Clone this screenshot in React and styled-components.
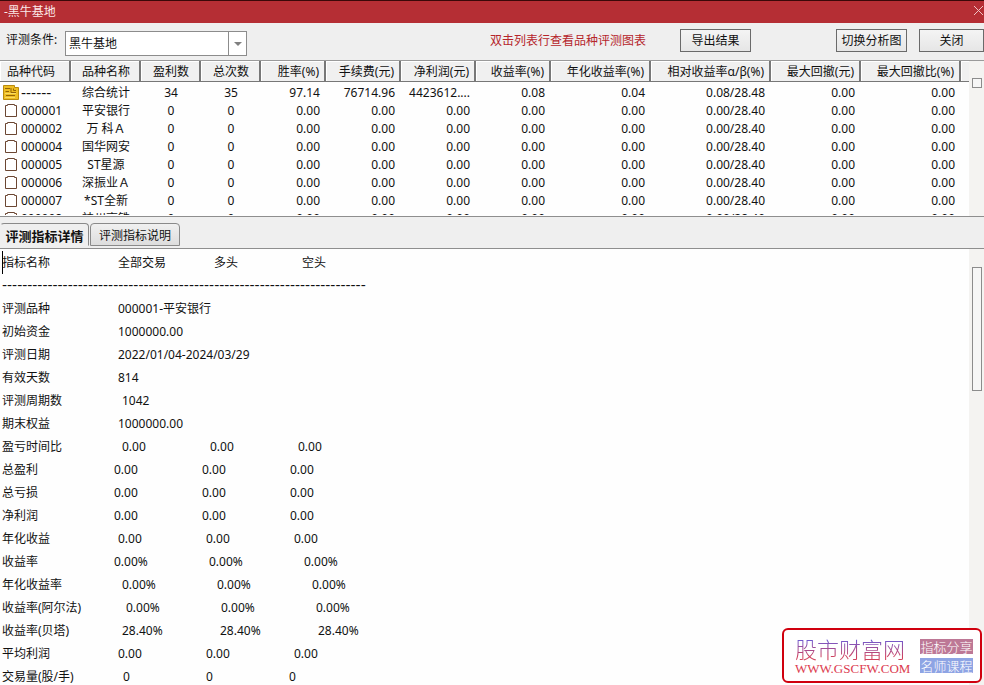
import React from 'react';
import styled, { createGlobalStyle } from 'styled-components';

const GlobalStyle = createGlobalStyle`
  * {
    box-sizing: border-box;
  }

  body {
    margin: 0;
    overflow: hidden;
    background: #fefefe;
    color: #111111;
    font: 12px/18px "Noto Sans", "Noto Sans CJK SC", sans-serif;
  }

  button, select {
    font: inherit;
    color: inherit;
  }
`;

const Window = styled.div`
  display: flex;
  flex-direction: column;
  height: 100vh;
`;

const TitleBar = styled.header`
  display: flex;
  justify-content: space-between;
  align-items: center;
  flex: none;
  height: 23px;
  padding-left: 4px;
  border-top: 1px solid #3a0808;
  background: #b52e34;
  color: #fbe9e9;
`;

const Title = styled.h1`
  margin: 0;
  font-size: 12px;
  font-weight: 400;
`;

const CloseIcon = styled.button`
  display: flex;
  padding: 0 0 4px;
  border: 0;
  background: none;
`;

const Toolbar = styled.div`
  display: flex;
  align-items: flex-start;
  flex: none;
  height: 37px;
  padding: 6px 0 0 6px;
  background: #efefef;
`;

const ToolbarLabel = styled.label`
  width: 59px;
  padding-top: 2px;
`;

const SelectBox = styled.div`
  display: flex;
  position: relative;
  width: 182px;
  height: 25px;
  margin-top: 2px;
`;

const Select = styled.select`
  appearance: none;
  width: 100%;
  padding: 0 22px 0 3px;
  border: 1px solid #8c8c8c;
  border-radius: 0;
  background: #ffffff;
`;

const SelectArrow = styled.span`
  display: flex;
  justify-content: center;
  align-items: center;
  position: absolute;
  top: 0;
  right: 0;
  width: 19px;
  height: 25px;
  border: 1px solid #8c8c8c;
  pointer-events: none;
`;

const Actions = styled.div`
  display: flex;
  flex: 1;
  justify-content: flex-end;
`;

const Hint = styled.span`
  padding-top: 3px;
  margin-right: 34px;
  color: #b5252b;
`;

const ToolButton = styled.button`
  width: ${props => props.$width || 71}px;
  height: 23px;
  margin-right: ${props => props.$gap || 0}px;
  padding: 0;
  border: 1px solid #6a6a6a;
  background: linear-gradient(#f4f4f4, #e6e6e6);
`;

const ListPane = styled.section`
  display: flex;
  flex: none;
  height: 157px;
  overflow: hidden;
  border-top: 1px solid #9a9a9a;
  border-bottom: 1px solid #8e8e8e;
`;

const ListClip = styled.div`
  flex: 1;
  height: 154px;
  overflow: hidden;
`;

const ListTable = styled.table`
  width: 100%;
  table-layout: fixed;
  border-collapse: separate;
  border-spacing: 0;
`;

const ListBody = styled.tbody`
  &::before {
    content: '';
    display: block;
    height: 2px;
  }
`;

const HeadCell = styled.th`
  height: 21px;
  padding: 1px 5px 0 7px;
  border: solid #777777;
  border-width: 0 2px 1px 0;
  background: #f0f0f0;
  box-shadow: inset 1px 1px 0 #ffffff;
  font-weight: 400;
  line-height: 19px;
  text-align: ${props => props.$align};
  white-space: nowrap;

  &:last-child {
    border-right: 0;
  }
`;

const ListRow = styled.tr`
  height: 18px;
`;

const Cell = styled.td`
  padding: ${props => (props.$align === 'right' ? '0 6px 0 0' : '0')};
  overflow: hidden;
  line-height: 18px;
  text-align: ${props => props.$align};
  text-overflow: ellipsis;
  white-space: nowrap;
`;

const Code = styled.span`
  display: flex;
  align-items: center;
  gap: 2px;
  padding-left: 2px;
`;

const Dashes = styled.span`
  font-family: "DejaVu Sans", sans-serif;
  font-size: 14px;
`;

const ScrollTrack = styled.div`
  flex: none;
  width: 15px;
  padding: ${props => props.$top}px 2px 0 3px;
  background: #f4f3f1;
`;

const ScrollThumb = styled.div`
  height: ${props => props.$height}px;
  border: 1px solid #8c8c8c;
  background: #f6f6f6;
`;

const TabStrip = styled.div`
  display: flex;
  gap: 1px;
  flex: none;
  height: 32px;
  padding-top: 6px;
  border-bottom: 1px solid #8e8e8e;
  background: #efefef;
`;

const Tab = styled.button`
  width: ${props => (props.$active ? 89 : 90)}px;
  height: 23px;
  padding: 2px 0 0;
  border: 1px solid #8a8a8a;
  border-bottom-color: ${props => (props.$active ? '#efefef' : '#8a8a8a')};
  border-left-color: ${props => (props.$active ? '#efefef' : '#8a8a8a')};
  border-radius: 4px 4px 0 0;
  background: ${props => (props.$active ? '#efefef' : 'linear-gradient(#f0f0f0, #dddddd)')};
  font-size: ${props => (props.$active ? 13 : 12)}px;
  font-weight: ${props => (props.$active ? 700 : 400)};
`;

const DetailPane = styled.section`
  display: flex;
  flex: 1;
  min-height: 0;
  overflow: hidden;
`;

const DetailTable = styled.table`
  display: block;
  flex: 1;
  padding: 2px 0 0 2px;
  border-spacing: 0;
`;

const DetailRow = styled.tr`
  display: flex;
  height: 23px;
  line-height: 23px;
  white-space: nowrap;
`;

const DetailCell = styled.td`
  flex: none;
  width: ${props => props.$width}px;
  padding: 0;
  font-weight: 400;
  text-align: left;
`;

const Caret = styled.span`
  position: absolute;
  top: 251px;
  left: 2px;
  width: 1px;
  height: 23px;
  background: #000000;
`;

const Badge = styled.aside`
  display: flex;
  justify-content: space-between;
  align-items: center;
  position: fixed;
  right: 2px;
  bottom: 2px;
  width: 200px;
  height: 55px;
  padding: 0 7px 0 11px;
  border: 2px solid #d0000e;
  border-radius: 6px;
  background: #ffffff;
`;

const BadgeName = styled.div`
  background: linear-gradient(#6a5cd8 15%, #d0405c 85%);
  background-clip: text;
  color: transparent;
  font: 300 22px/26px "Noto Sans CJK SC", sans-serif;
`;

const BadgeUrl = styled.div`
  color: #dc3c50;
  font: 13px/15px "Liberation Serif", serif;
`;

const BadgeTags = styled.div`
  display: flex;
  flex-direction: column;
  gap: 4px;
`;

const BadgeTag = styled.span`
  width: 53px;
  height: 15px;
  background: ${props => props.$color};
  color: #ffffff;
  font: 300 13px/15px "Noto Sans CJK SC", sans-serif;
  text-align: center;
`;

const columns = [
  { title: '品种代码', width: 71, align: 'left' },
  { title: '品种名称', width: 70, align: 'center' },
  { title: '盈利数', width: 60, align: 'center' },
  { title: '总次数', width: 60, align: 'center' },
  { title: '胜率(%)', width: 65, align: 'right' },
  { title: '手续费(元)', width: 75, align: 'right' },
  { title: '净利润(元)', width: 75, align: 'right' },
  { title: '收益率(%)', width: 75, align: 'right' },
  { title: '年化收益率(%)', width: 100, align: 'right' },
  { title: '相对收益率α/β(%)', width: 120, align: 'right' },
  { title: '最大回撤(元)', width: 90, align: 'right' },
  { title: '最大回撤比(%)', width: 100, align: 'right' }
];

const emptyStats = ['0', '0', '0.00', '0.00', '0.00', '0.00', '0.00', '0.00/28.40', '0.00', '0.00'];

const stocks = [
  ['------', '综合统计', '34', '35', '97.14', '76714.96', '4423612....', '0.08', '0.04', '0.08/28.48', '0.00', '0.00'],
  ['000001', '平安银行', ...emptyStats],
  ['000002', '万 科Ａ', ...emptyStats],
  ['000004', '国华网安', ...emptyStats],
  ['000005', 'ST星源', ...emptyStats],
  ['000006', '深振业Ａ', ...emptyStats],
  ['000007', '*ST全新', ...emptyStats],
  ['000008', '神州高铁', ...emptyStats]
];

// start is where the first value begins, step the distance to the next one
const details = [
  { name: '评测品种', start: 116, step: 88, values: ['000001-平安银行'] },
  { name: '初始资金', start: 116, step: 88, values: ['1000000.00'] },
  { name: '评测日期', start: 116, step: 88, values: ['2022/01/04-2024/03/29'] },
  { name: '有效天数', start: 116, step: 88, values: ['814'] },
  { name: '评测周期数', start: 120, step: 88, values: ['1042'] },
  { name: '期末权益', start: 116, step: 88, values: ['1000000.00'] },
  { name: '盈亏时间比', start: 120, step: 88, values: ['0.00', '0.00', '0.00'] },
  { name: '总盈利', start: 112, step: 88, values: ['0.00', '0.00', '0.00'] },
  { name: '总亏损', start: 112, step: 88, values: ['0.00', '0.00', '0.00'] },
  { name: '净利润', start: 112, step: 88, values: ['0.00', '0.00', '0.00'] },
  { name: '年化收益', start: 116, step: 88, values: ['0.00', '0.00', '0.00'] },
  { name: '收益率', start: 112, step: 95, values: ['0.00%', '0.00%', '0.00%'] },
  { name: '年化收益率', start: 120, step: 95, values: ['0.00%', '0.00%', '0.00%'] },
  { name: '收益率(阿尔法)', start: 124, step: 95, values: ['0.00%', '0.00%', '0.00%'] },
  { name: '收益率(贝塔)', start: 120, step: 98, values: ['28.40%', '28.40%', '28.40%'] },
  { name: '平均利润', start: 116, step: 88, values: ['0.00', '0.00', '0.00'] },
  { name: '交易量(股/手)', start: 121, step: 83, values: ['0', '0', '0'] }
];

const SummaryIcon = () => (
  <svg width="17" height="16" viewBox="0 0 17 16" aria-hidden="true">
    <path d="M1.5 .5H12.5V2.5H16.5V14.5H1.5Z" fill="#eebd22" stroke="#b98a0e" />
    <path d="M3 3.5H8M3.5 6.5H7M9 3V7.5H14M11.5 3.5V5.5H14M4 10.5H13" fill="none" stroke="#946405" />
    <path d="M3 8.5H14M3 12.5H13" stroke="#f9da62" />
  </svg>
);

const StockIcon = () => (
  <svg width="17" height="16" viewBox="0 0 17 16" aria-hidden="true">
    <path d="M3.5 2.5H5.5V1.5H12.5V2.5H14.5V13.5H3.5Z" fill="#ffffff" stroke="#6b4632" />
  </svg>
);

const App = () => (
  <Window>
    <GlobalStyle />
    <TitleBar>
      <Title>-黑牛基地</Title>
      <CloseIcon aria-label="关闭窗口">
        <svg width="11" height="11" viewBox="0 0 11 11">
          <path d="M1 1 10 10M10 1 1 10" stroke="#f0c4c4" />
        </svg>
      </CloseIcon>
    </TitleBar>
    <Toolbar>
      <ToolbarLabel htmlFor="condition">评测条件:</ToolbarLabel>
      <SelectBox>
        <Select id="condition">
          <option>黑牛基地</option>
        </Select>
        <SelectArrow>
          <svg width="8" height="4" viewBox="0 0 8 4">
            <path d="M0 0H8L4 4Z" fill="#808080" />
          </svg>
        </SelectArrow>
      </SelectBox>
      <Actions>
        <Hint>双击列表行查看品种评测图表</Hint>
        <ToolButton $gap={85}>导出结果</ToolButton>
        <ToolButton $gap={12}>切换分析图</ToolButton>
        <ToolButton $width={65}>关闭</ToolButton>
      </Actions>
    </Toolbar>
    <ListPane>
      <ListClip>
        <ListTable>
          <colgroup>
            {columns.map(column => <col key={column.title} width={column.width} />)}
            <col />
          </colgroup>
          <thead>
            <tr>
              {columns.map(column => (
                <HeadCell key={column.title} $align={column.align}>{column.title}</HeadCell>
              ))}
              <HeadCell as="td" />
            </tr>
          </thead>
          <ListBody>
            {stocks.map(([code, ...values]) => (
              <ListRow key={code}>
                <Cell>
                  <Code>
                    {code === '------' ? <SummaryIcon /> : <StockIcon />}
                    {code === '------' ? <Dashes>{code}</Dashes> : code}
                  </Code>
                </Cell>
                {values.map((value, i) => (
                  <Cell key={i} $align={columns[i + 1].align}>{value}</Cell>
                ))}
                <Cell />
              </ListRow>
            ))}
          </ListBody>
        </ListTable>
      </ListClip>
      <ScrollTrack $top={17}>
        <ScrollThumb $height={10} />
      </ScrollTrack>
    </ListPane>
    <TabStrip role="tablist">
      <Tab role="tab" aria-selected="true" $active>评测指标详情</Tab>
      <Tab role="tab" aria-selected="false">评测指标说明</Tab>
    </TabStrip>
    <DetailPane>
      <Caret />
      <DetailTable>
        <thead>
          <DetailRow>
            <DetailCell as="th" $width={116}>指标名称</DetailCell>
            <DetailCell as="th" $width={96}>全部交易</DetailCell>
            <DetailCell as="th" $width={88}>多头</DetailCell>
            <DetailCell as="th" $width={88}>空头</DetailCell>
          </DetailRow>
        </thead>
        <tbody>
          <DetailRow>
            <DetailCell>
              <Dashes>{'-'.repeat(72)}</Dashes>
            </DetailCell>
          </DetailRow>
          {details.map(({ name, start, step, values }) => (
            <DetailRow key={name}>
              <DetailCell $width={start}>{name}</DetailCell>
              {values.map((value, i) => (
                <DetailCell key={i} $width={step}>{value}</DetailCell>
              ))}
            </DetailRow>
          ))}
        </tbody>
      </DetailTable>
      <ScrollTrack $top={18}>
        <ScrollThumb $height={124} />
      </ScrollTrack>
    </DetailPane>
    <Badge>
      <div>
        <BadgeName>股市财富网</BadgeName>
        <BadgeUrl>WWW.GSCFW.COM</BadgeUrl>
      </div>
      <BadgeTags>
        <BadgeTag $color="#bd7896">指标分享</BadgeTag>
        <BadgeTag $color="#8ea4e4">名师课程</BadgeTag>
      </BadgeTags>
    </Badge>
  </Window>
);

export default App;
